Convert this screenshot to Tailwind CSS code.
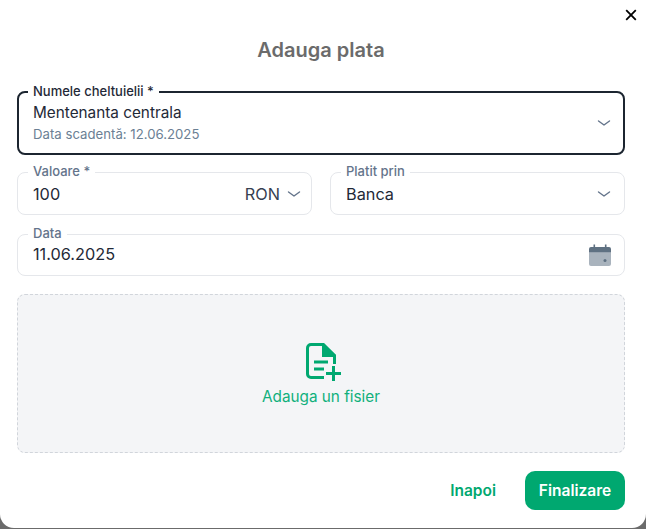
<!DOCTYPE html>
<html lang="en">
<head>
  <meta charset="UTF-8">
  <title>Adauga plata</title>
  <script src="https://cdn.jsdelivr.net/npm/@tailwindcss/browser@4"></script>
</head>
<body class="bg-[#6b6b6b] h-[529px] overflow-hidden font-['Inter',sans-serif]">
  <div class="relative bg-white h-[528px] rounded-b-[14px] pl-[17px] pr-[21px] pt-[39px] w-[646px]">
    <!-- Close -->
    <button class="absolute top-[9px] right-[9px] w-[12px] h-[12px]">
      <svg class="w-[12px] h-[12px] block" viewBox="0 0 12 12" fill="none" stroke="#000" stroke-width="1.8"><path d="M1.2 1.2 10.8 10.8M10.8 1.2 1.2 10.8"/></svg>
    </button>

    <h1 class="text-center text-[20px] leading-[22px] font-semibold text-[#6b6b6b]">Adauga plata</h1>

    <!-- Numele cheltuielii -->
    <div class="relative mt-[30px] h-[64px] border-2 border-[#1c2530] rounded-[8px] pl-[14px] pr-[12px] flex items-center justify-between">
      <span class="absolute -top-[10px] left-[9px] bg-white px-[5px] text-[13px] leading-[16px] font-medium text-[#1f2937]">Numele cheltuielii *</span>
      <div class="-mt-[1px]">
        <div class="text-[15.3px] leading-[20px] text-[#1f2937]">Mentenanta centrala</div>
        <div class="text-[13.2px] leading-[16px] mt-[3px] text-[#6b7f94]">Data scadentă: 12.06.2025</div>
      </div>
      <svg class="w-[14px] h-[14px]" viewBox="0 0 14 14" fill="none" stroke="#64748b" stroke-width="1.4" stroke-linecap="round" stroke-linejoin="round"><path d="M1.5 5l5.5 4 5.5-4"/></svg>
    </div>

    <!-- Valoare / Platit prin -->
    <div class="flex gap-[18px] mt-[17px]">
      <div class="relative w-[295px] h-[43px] border border-[#e5e7eb] rounded-[8px] pl-[15px] pr-[10px] flex items-center justify-between">
        <span class="absolute -top-[10px] left-[10px] bg-white px-[5px] text-[13px] leading-[16px] font-medium text-[#64748b]">Valoare *</span>
        <span class="text-[16.3px] leading-[24px] text-[#1f2937]">100</span>
        <div class="flex items-center gap-[7px]">
          <span class="text-[16.3px] leading-[24px] text-[#374151]">RON</span>
          <svg class="w-[14px] h-[14px]" viewBox="0 0 14 14" fill="none" stroke="#64748b" stroke-width="1.4" stroke-linecap="round" stroke-linejoin="round"><path d="M1.5 5l5.5 4 5.5-4"/></svg>
        </div>
      </div>
      <div class="relative flex-1 h-[43px] border border-[#e5e7eb] rounded-[8px] pl-[15px] pr-[13px] flex items-center justify-between">
        <span class="absolute -top-[10px] left-[10px] bg-white px-[5px] text-[13px] leading-[16px] font-medium text-[#64748b]">Platit prin</span>
        <span class="text-[16.3px] leading-[24px] text-[#1f2937]">Banca</span>
        <svg class="w-[14px] h-[14px]" viewBox="0 0 14 14" fill="none" stroke="#64748b" stroke-width="1.4" stroke-linecap="round" stroke-linejoin="round"><path d="M1.5 5l5.5 4 5.5-4"/></svg>
      </div>
    </div>

    <!-- Data -->
    <div class="relative mt-[19px] h-[42px] border border-[#e5e7eb] rounded-[8px] pl-[15px] pr-[13px] flex items-center justify-between">
      <span class="absolute -top-[10px] left-[10px] bg-white px-[5px] text-[13px] leading-[16px] font-medium text-[#64748b]">Data</span>
      <span class="text-[16.3px] leading-[24px] text-[#1f2937] -mt-[2px]">11.06.2025</span>
      <svg class="w-[22px] h-[24px]" viewBox="0 0 22 24">
        <path d="M0 9.5h22V21a2 2 0 0 1-2 2H2a2 2 0 0 1-2-2z" fill="#a9b3bd"/>
        <path d="M2 4h2.5V1.5h1.6V4h9.8V1.5h1.6V4H20a2 2 0 0 1 2 2v3.5H0V6a2 2 0 0 1 2-2z" fill="#5f7182"/>
        <circle cx="16" cy="17.5" r="1.5" fill="#5f7182"/>
      </svg>
    </div>

    <!-- Dropzone -->
    <div class="mt-[18px] h-[159px] bg-[#f4f5f7] border border-dashed border-[#d1d5db] rounded-[8px] flex flex-col items-center pt-[48px]">
      <svg class="w-[36px] h-[38px] ml-[6px]" viewBox="0 0 36 38" fill="none">
        <path d="M5 0H18L30 12V21H27V14H16V3H5a2 2 0 0 0-2 2V31a2 2 0 0 0 2 2H18v3H5a5 5 0 0 1-5-5V5a5 5 0 0 1 5-5z" fill="#00a870"/>
        <path d="M18 0.5 30 12H18z" fill="#00a870"/>
        <path d="M8 17.5h14v3H8zM8 24.5h10v3H8z" fill="#00a870"/>
        <path d="M27.5 23v15M20 30.5h15" stroke="#00a870" stroke-width="3"/>
      </svg>
      <span class="mt-[6px] text-[15.3px] leading-[20px] text-[#10b07c]">Adauga un fisier</span>
    </div>

    <!-- Actions -->
    <div class="flex justify-end items-center gap-[29px] mt-[18px]">
      <button class="text-[15.5px] leading-[20px] font-semibold text-[#00a870]">Inapoi</button>
      <button class="h-[39px] w-[100px] rounded-[10px] bg-[#00a870] text-white text-[15.5px] font-semibold">Finalizare</button>
    </div>
  </div>
</body>
</html>
